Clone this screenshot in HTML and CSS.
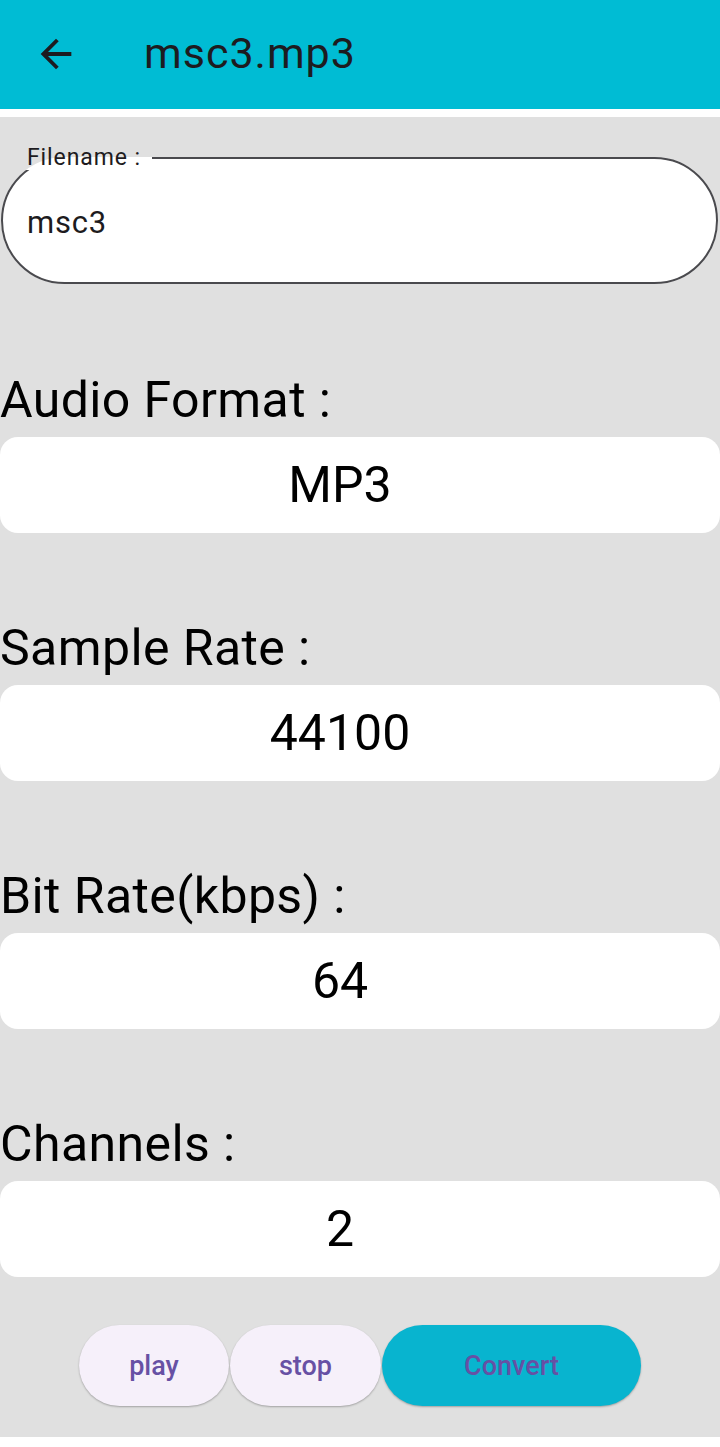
FILE: index.html
```html
<!DOCTYPE html>
<html lang="en">
<head>
<meta charset="utf-8">
<title>msc3.mp3</title>
<link rel="stylesheet" href="styles.css">
</head>
<body>
<header class="appbar">
  <span class="back">
    <svg viewBox="0 0 24 24" width="46" height="46"><path d="M20 11H7.83l5.59-5.59L12 4l-8 8 8 8 1.41-1.41L7.83 13H20v-2z" fill="#1d1b20"/></svg>
  </span>
  <h1 class="title">msc3.mp3</h1>
</header>
<div class="divider"></div>
<main class="main">
  <fieldset class="filename">
    <legend class="filename-label">Filename :</legend>
    <div class="filename-value">msc3</div>
  </fieldset>

  <section class="setting">
    <div class="setting-label">Audio Format :</div>
    <div class="setting-box">MP3</div>
  </section>
  <section class="setting">
    <div class="setting-label">Sample Rate :</div>
    <div class="setting-box">44100</div>
  </section>
  <section class="setting">
    <div class="setting-label">Bit Rate(kbps) :</div>
    <div class="setting-box">64</div>
  </section>
  <section class="setting">
    <div class="setting-label">Channels :</div>
    <div class="setting-box">2</div>
  </section>

  <div class="actions">
    <button class="btn btn-light btn-play">play</button>
    <button class="btn btn-light btn-stop">stop</button>
    <button class="btn btn-convert">Convert</button>
  </div>
</main>
</body>
</html>
```
FILE: styles.css
```css
* { box-sizing: border-box; }
html, body { margin: 0; padding: 0; }
body {
  background: #ffffff;
  font-family: Roboto, "Noto Sans", "Liberation Sans", sans-serif;
  width: 720px;
  height: 1447px;
  overflow: hidden;
}
.appbar {
  height: 109px;
  background: #00bcd4;
  display: flex;
  align-items: center;
}
.back {
  width: 46px;
  height: 46px;
  margin-left: 33px;
  margin-top: -2px;
  display: block;
}
.back svg { display: block; }
.title {
  margin: 0 0 0 65px;
  font-size: 43px;
  font-weight: 400;
  line-height: 50px;
  letter-spacing: 1px;
  color: #1d1b20;
  padding-bottom: 3px;
}
.divider { height: 8px; background: #ffffff; }
.main {
  background: #e0e0e0;
  height: 1320px;
  padding-top: 29px;
}
.filename {
  margin: 0 2px 0 1px;
  padding: 0 0 0 24px;
  border: 2px solid #4a4a4e;
  border-radius: 64px;
  background: #ffffff;
  min-inline-size: 0;
}
.filename-label {
  margin-left: -5px;
  padding: 0 11px 0 5px;
  font-size: 23px;
  line-height: 24px;
  letter-spacing: 0.9px;
  color: #1d1b20;
}
.filename-value {
  height: 112px;
  padding-top: 35px;
  font-size: 31px;
  line-height: 36px;
  letter-spacing: 0.8px;
  color: #1d1b20;
}
.setting { margin-top: 86px; }
.setting:first-of-type { margin-top: 87px; }
.setting-label {
  font-size: 50px;
  line-height: 58px;
  color: #000000;
  letter-spacing: 0.4px;
}
.setting-box {
  margin-top: 8px;
  height: 96px;
  background: #ffffff;
  border-radius: 18px;
  text-align: center;
  padding-right: 40px;
  font-size: 50px;
  line-height: 96px;
  color: #000000;
}
.actions {
  margin-top: 48px;
  display: flex;
  justify-content: center;
  gap: 1px;
}
.btn {
  height: 81px;
  border: none;
  border-radius: 41px;
  font-family: Roboto, "Noto Sans", sans-serif;
  font-size: 27px;
  font-weight: 500;
  color: #6750a4;
  box-shadow: 0 1px 2px rgba(0,0,0,0.28);
  padding: 0;
}
.btn-light { background: #f6f0fa; }
.btn-play { width: 150px; }
.btn-stop { width: 151px; }
.btn-convert { width: 259px; background: #08b4cf; }
```
